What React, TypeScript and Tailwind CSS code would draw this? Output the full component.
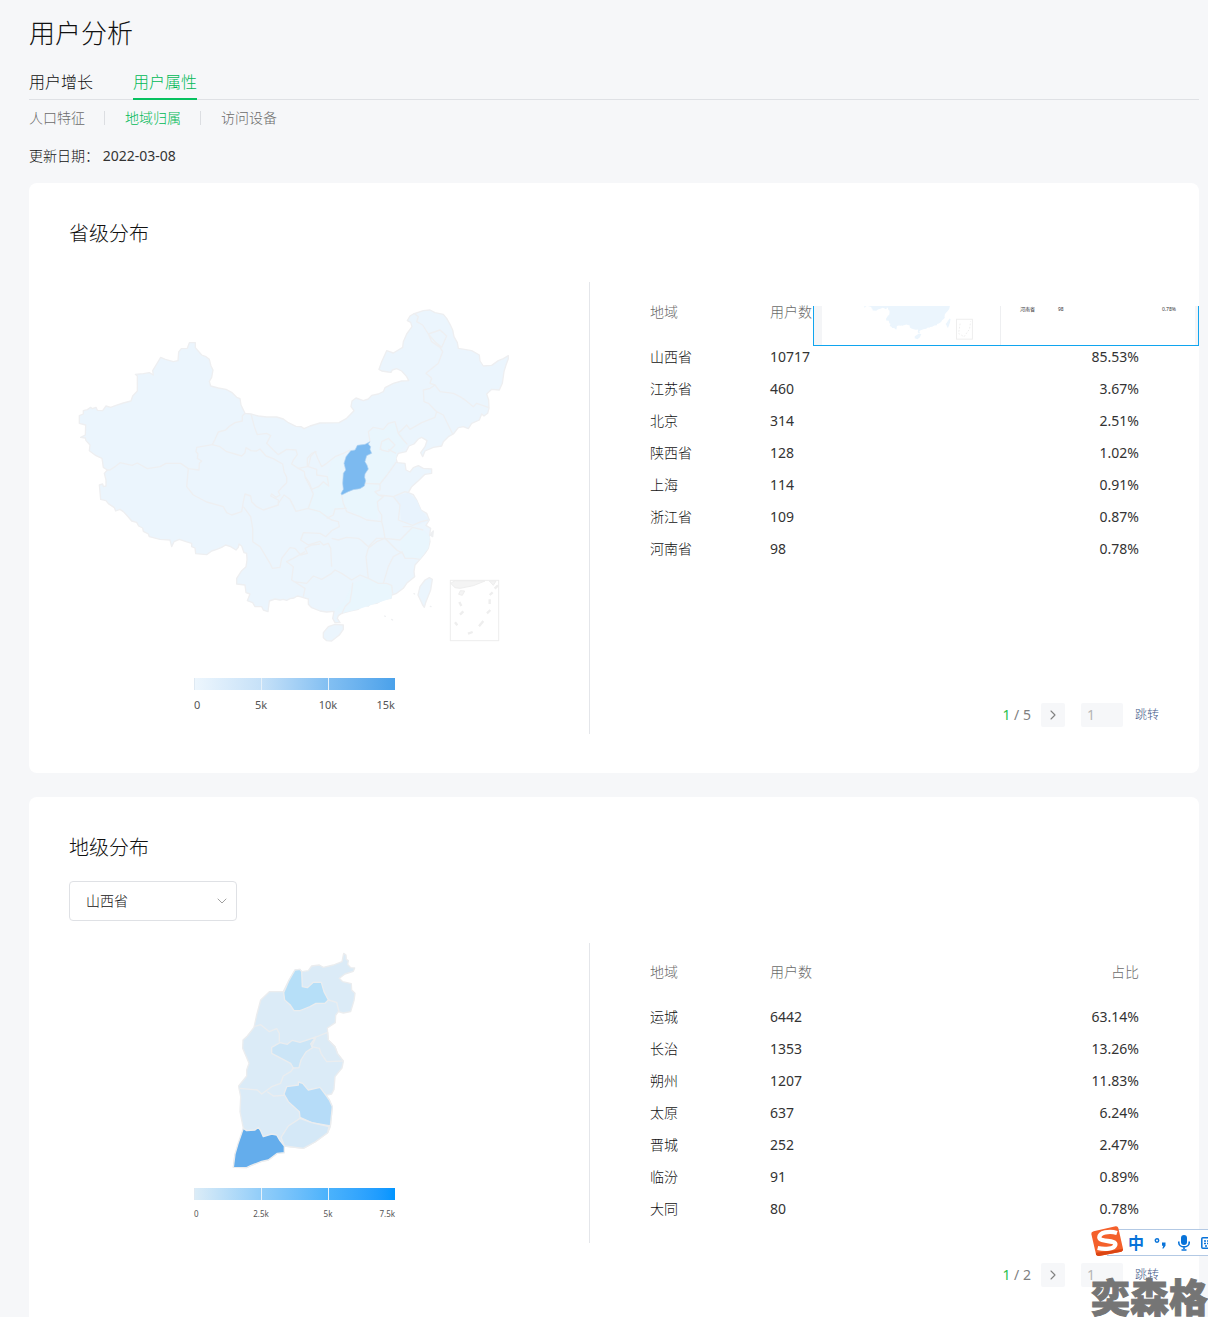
import React from 'react';
import { ChevronDown, ChevronRight } from 'lucide-react';

type Row = [string, string, string];

const provinces: Row[] = [
  ['山西省', '10717', '85.53%'],
  ['江苏省', '460', '3.67%'],
  ['北京', '314', '2.51%'],
  ['陕西省', '128', '1.02%'],
  ['上海', '114', '0.91%'],
  ['浙江省', '109', '0.87%'],
  ['河南省', '98', '0.78%'],
];

const cities: Row[] = [
  ['运城', '6442', '63.14%'],
  ['长治', '1353', '13.26%'],
  ['朔州', '1207', '11.83%'],
  ['太原', '637', '6.24%'],
  ['晋城', '252', '2.47%'],
  ['临汾', '91', '0.89%'],
  ['大同', '80', '0.78%'],
];

const CHINA_OUTLINE =
  'M58 377L70 372L70 362L82 359L92 352L97 356L108 352L112 361L128 362L138 348L152 352L168 346L190 339L213 333L218 318L232 303L232 258L226 253L250 251L268 248L280 255L278 242L290 222L302 202L316 208L340 215L354 212L356 186L364 176L382 175L388 158L406 158L406 173L425 195L438 200L448 208L453 228L459 240L455 262L448 274L452 288L475 294L498 298L515 307L530 322L540 326L543 345L555 370L573 372L595 378L620 381L650 381L670 387L685 398L708 409L723 410L732 416L750 408L780 399L837 398L860 385L882 362L873 350L876 333L888 324L910 332L925 327L935 316L955 312L970 305L975 293L1000 280L1025 273L1046 272L1040 260L1025 243L1010 236L997 240L993 247L985 246L965 243L957 238L965 215L980 182L1000 189L1028 172L1030 155L1040 132L1056 110L1052 97L1042 92L1050 78L1060 72L1090 62L1110 60L1125 68L1150 73L1160 85L1170 103L1178 120L1182 140L1192 158L1195 175L1218 179L1235 182L1258 195L1260 213L1270 228L1295 226L1315 212L1330 206L1345 197L1345 206L1338 225L1332 245L1327 280L1318 300L1295 298L1280 312L1286 330L1287 355L1283 370L1272 378L1265 372L1258 390L1235 400L1225 416L1210 410L1195 413L1180 432L1165 440L1150 455L1145 468L1120 472L1095 483L1088 500L1082 488L1095 470L1101 452L1085 442L1075 447L1062 462L1047 468L1038 485L1015 490L1008 505L1012 518L1035 520L1038 540L1050 546L1060 533L1075 527L1090 535L1115 537L1115 550L1095 553L1075 572L1055 590L1045 608L1060 614L1070 630L1083 660L1100 670L1108 690L1098 706L1112 715L1108 740L1110 755L1105 775L1095 790L1080 808L1065 825L1062 845L1064 860L1040 880L1030 895L1010 910L995 915L993 925L970 928L950 940L930 942L925 948L910 946L895 958L870 963L845 970L835 977L832 985L840 998L825 998L818 985L822 964L800 966L780 963L755 953L745 943L745 927L720 920L712 918L702 924L690 926L680 931L670 928L660 930L645 927L628 933L624 965L610 960L605 950L585 950L578 938L562 932L570 912L558 908L555 885L530 882L530 865L545 842L558 830L561 810L560 790L552 788L545 768L537 762L535 772L528 780L512 770L497 765L485 772L470 778L455 783L440 794L407 791L405 774L395 770L395 760L378 755L358 748L342 755L335 770L330 750L300 748L268 740L265 732L250 724L248 714L236 708L230 697L215 693L205 681L190 665L180 658L167 663L163 653L145 641L138 632L122 628L118 585L128 582L130 590L138 588L138 570L133 550L142 540L130 532L126 505L108 497L88 482L90 465L78 452L76 444L62 442L76 435L77 405L58 400Z';

const CHINA_BORDERS = [
  'M555 370L547 378L547 393L525 398L508 409L497 420L475 426L465 448L457 464L410 472L408 485L414 492L412 505L425 513L418 520L417 540L385 536L362 520L318 520L300 530L262 536L232 519L216 526L180 518L165 530L150 540L142 540',
  'M457 464L480 470L500 485L525 492L545 498L555 488L558 473L573 482L590 483L600 477L618 498L640 506L655 515L668 522L672 545L680 562L680 578L668 590L655 605L660 615L648 622L635 612L632 618L655 630L655 645L610 660L590 650L575 635L572 618L555 612L550 635L545 665L515 675L500 668L490 650L440 636L400 615L380 590L385 536',
  'M573 372L583 410L592 434L620 430L632 437L620 460L640 480L655 494L680 478L708 480L712 494L700 510L695 522L715 535L733 545L735 560L748 578L755 598L775 590L790 575L806 588L802 560L770 555L770 538L745 530L752 500L765 484L773 505L785 530L800 520L825 500L850 490L870 480',
  'M715 535L742 530L742 505L755 490L770 485M735 560L750 590L760 612L745 655L708 664L690 628L672 615L655 640M742 655L780 665L800 680L815 690L835 695L838 710L815 722L797 740L780 730L730 728L722 750L745 765L780 754L790 765L805 760L812 775L815 830',
  'M550 650L572 680L578 715L578 755M578 755L600 770L630 820L637 835L660 832L665 805L690 773L705 775L722 795L742 790L735 775L755 765L780 762M735 785L700 805L680 815L700 830L695 870L735 895L730 920M700 875L740 880L760 858L785 868L815 850L825 840L845 850L875 870L900 855L925 865L955 880L980 880L995 886L998 910',
  'M845 615L850 640L860 665L900 680L920 690L965 695L970 715L975 745L950 755L925 775L918 800L925 865M860 655L825 657L820 675L800 685M815 745L835 750L860 742L895 745L903 750L925 770L950 745L975 745L1020 750L1040 730L1058 712L1090 720',
  'M975 745L1010 780L1028 790L1035 805L1060 805L1080 808M1028 785L1000 800L985 830L970 880M1028 710L1055 710M845 972L855 950L870 935L875 905L878 878',
  'M912 580L960 582L960 600L945 605L955 615L970 620L952 635L955 660L965 675L965 695M960 582L985 550L1010 515M955 615L985 618L1000 620L1035 605L1045 608M1000 620L1020 645L1015 690L1058 706L1083 695L1105 690',
  'M930 455L925 425L940 412L970 418L985 400L1005 395L1015 430L1030 450L1042 463M960 480L965 455L985 445L1005 465L985 485L965 480L960 470M985 478L1008 490',
  'M1015 430L1035 410L1040 405L1050 418L1085 398L1125 382L1130 365L1105 340L1092 335L1090 300L1110 295L1125 285L1140 305L1180 310L1200 320L1218 332L1240 350L1250 340L1287 353M1130 365L1150 375L1162 400L1178 432',
  'M1065 72L1075 80L1070 95L1088 105L1105 132L1115 155L1140 172L1148 185L1135 220L1098 250L1115 265L1110 280L1125 285M1105 132L1140 120L1160 138L1145 172L1125 155Z',
];

const SHANXI_OUTLINE =
  'M371 40L378 45L379 58L385 62L383 73L392 83L404 84L400 94L375 102L358 115L368 125L394 131L395 150L405 160L402 182L392 215L370 219L355 215L347 226L346 248L322 264L323 278L325 300L345 320L352 340L370 365L366 384L345 410L342 448L335 462L318 466L328 480L337 500L331 560L323 578L285 606L250 625L193 618L193 638L172 640L145 660L125 664L92 677L80 683L40 682L45 642L68 590L70 565L60 515L62 470L57 445L56 438L80 408L80 390L87 370L68 325L69 300L82 288L102 262L110 225L122 180L148 155L190 155L207 121L225 90L240 88L245 95L265 92L275 78L298 75L310 82L340 75L366 65Z';

const CITY_FILLS: [string, string][] = [
  ['#b6dff8', 'M225 90L240 88L245 95L247 140L262 143L280 127L304 127L312 155L325 180L315 190L288 190L270 200L252 207L240 212L222 212L210 194L194 180L191 158L207 121Z'],
  ['#cbe5f7', 'M155 322L180 308L202 313L217 301L240 307L288 291L272 312L278 323L258 336L243 360L237 383L220 384L212 370L155 340Z'],
  ['#dcebf6', 'M288 291L323 277L325 300L345 320L352 340L370 363L320 365L303 340L298 325L275 320Z'],
  ['#b6dcf8', 'M200 440L235 435L235 426L248 430L258 442L265 450L300 442L318 466L328 480L337 500L331 558L275 548L240 532L238 515L205 485L192 462Z'],
  ['#d4e8f7', 'M205 558L240 535L275 548L327 560L323 578L285 606L250 625L193 618L183 592Z'],
  ['#64adec', 'M70 565L80 572L105 570L115 562L122 572L130 590L155 582L170 585L180 602L193 618L193 638L172 640L145 660L125 664L92 677L80 683L40 682L45 642L55 608Z'],
];

function ChinaMap() {
  return (
    <svg viewBox="27 0 1353 1110" className="block w-full" role="img" aria-label="省级分布地图">
      <g stroke="#eeeff1" strokeWidth="4" strokeLinejoin="round">
        <path d={CHINA_OUTLINE} fill="#ebf5fd" />
        <path fill="#e9f6fd" stroke="none" d="M850 492L815 512L802 560L762 600L742 655L800 685L820 657L860 655L900 680L955 690L950 640L970 620L945 605L960 582L1008 510L1010 490L1040 463L1005 398L970 418L930 420L932 478L915 515L925 537L908 590L845 615L850 550Z" />
        <path fill="#e9f6fd" stroke="none" d="M1058 712L1090 720L1110 740L1105 775L1080 808L1035 805L1020 770L1022 750ZM878 878L925 865L995 886L995 925L895 958L845 970L825 960L855 930Z" />
        <path fill="#e8f3fd" stroke="none" d="M1000 620L1045 608L1070 630L1083 660L1108 690L1075 705L1025 695L1018 645Z" />
        <g fill="none">
          {CHINA_BORDERS.map((d) => (
            <path key={d} d={d} />
          ))}
        </g>
        <path fill="#ebf5fd" d="M790 1028L805 1010L825 1003L850 1005L850 1018L838 1035L815 1053L800 1052L790 1043Z" />
        <path fill="#ebf5fd" d="M1108 863L1117 868L1112 900L1098 935L1093 952L1088 945L1074 915L1080 890L1095 870Z" />
        <path fill="#eceff1" d="M1110 735L1120 723L1118 740ZM974 978L976 979ZM995 988L998 990ZM1062 911L1064 912ZM1111 949L1113 950Z" />
        <path fill="#7cbaf0" stroke="#b4d5f2" strokeWidth="2" d="M930 455L925 462L932 470L930 478L935 490L920 497L915 515L921 525L925 537L915 552L914 562L917 572L913 588L900 596L880 599L865 605L845 615L843 610L850 598L848 580L850 550L857 540L852 520L858 500L872 482L885 480L892 466L915 463Z" />
      </g>
      <g stroke="#eeeeee" fill="none" strokeWidth="3">
        <rect x="1171" y="871" width="145" height="181" />
        <path fill="#f4f4f4" d="M1172 880L1185 872L1275 873L1240 887L1200 895L1185 893ZM1288 873L1300 886L1308 873ZM1196 913L1201 902L1214 903L1207 916Z" />
        <path strokeWidth="7" d="M1198 936L1204 948M1200 974L1210 964M1185 997L1192 1006M1224 1031L1238 1026M1257 1009L1270 993M1281 970L1291 960M1289 928L1289 942M1289 915L1298 907M1304 896L1314 886" />
      </g>
    </svg>
  );
}

function ShanxiMap() {
  return (
    <svg viewBox="-15 9 480 717" className="mx-auto block w-40" role="img" aria-label="地级分布地图">
      <g stroke="#ebedef" strokeWidth="4" strokeLinejoin="round">
        <path d={SHANXI_OUTLINE} fill="#dbebf7" />
        {CITY_FILLS.map(([fill, d]) => (
          <path key={d} d={d} fill={fill} />
        ))}
        <path fill="none" d="M102 260L122 254L148 275L170 266L178 280L178 305M325 180L350 187L357 215M220 384L213 394L190 408L182 430L155 440L125 462L112 450L60 445M142 455L160 468L192 466" />
      </g>
    </svg>
  );
}

function Legend({ segments, labels, small }: { segments: string[]; labels: string[]; small?: boolean }) {
  return (
    <div className="mx-auto w-[201px]">
      <div className="grid h-3 grid-cols-3 gap-px border-l border-[#dfe9f2] bg-[#e6f1fa]">
        {segments.map((s) => (
          <div key={s} className={s} />
        ))}
      </div>
      <div
        className={`grid grid-cols-[1fr_2fr_2fr_1fr] text-center leading-[14px] font-normal text-[#555] ${
          small ? 'mt-[7px] text-[8px]' : 'mt-2 text-[11px]'
        }`}
      >
        {labels.map((l) => (
          <span key={l} className="first:text-left last:text-right">{l}</span>
        ))}
      </div>
    </div>
  );
}

function DataTable({ rows }: { rows: Row[] }) {
  return (
    <div className="pr-5">
      <table className="w-full table-fixed text-sm text-[#111]">
        <thead>
          <tr className="h-8 text-[#6b6b6b]">
            <th className="w-[120px] p-0 text-left font-light">地域</th>
            <th className="p-0 text-left font-light">用户数</th>
            <th className="w-[120px] p-0 text-right font-light">占比</th>
          </tr>
        </thead>
        <tbody className="before:block before:h-[13px]">
          {rows.map(([name, count, share]) => (
            <tr key={name} className="h-8">
              <td className="p-0">{name}</td>
              <td className="p-0 font-normal text-[#333]">{count}</td>
              <td className="p-0 text-right font-normal text-[#333]">{share}</td>
            </tr>
          ))}
        </tbody>
      </table>
    </div>
  );
}

function Pager({ total }: { total: number }) {
  return (
    <div className="flex h-6 items-center justify-end text-sm text-[#808080]">
      <span className="font-normal">
        <span className="text-[#2abf4c]">1</span> / {total}
      </span>
      <button aria-label="下一页" className="ml-[10px] flex h-6 w-6 items-center justify-center rounded-xs bg-[#f6f7f9]">
        <ChevronRight size={16} strokeWidth={1.6} />
      </button>
      <input aria-label="页码" placeholder="1" className="ml-4 h-6 w-[42px] rounded-xs bg-[#f6f7f9] px-[6px] leading-6 font-normal placeholder:text-[#b5b5b5]" />
      <button className="ml-3 text-xs text-[#435a8a]">跳转</button>
    </div>
  );
}

function PreviewOverlay() {
  return (
    <div className="absolute top-[119px] right-0 w-[386px] bg-white pt-1">
      <div className="flex h-10 overflow-hidden border-x border-b border-[#10a5ef]">
        <div className="w-2 bg-[#f4f5f7]" />
        <div className="w-[179px] border-r border-[#eeeff1]">
          <svg viewBox="0 750 1440 330" className="ml-[6px] block h-[38px] w-[158px]" preserveAspectRatio="xMidYMin meet" aria-hidden="true">
            <path d={CHINA_OUTLINE} fill="#ebf5fd" />
            <path fill="#ebf5fd" d="M790 1028L825 1003L850 1005L838 1035L815 1053L790 1043ZM1108 863L1117 868L1112 900L1093 952L1074 915Z" />
            <rect x="1171" y="871" width="145" height="181" fill="none" stroke="#eee" strokeWidth="9" />
            <path fill="none" stroke="#eee" strokeWidth="9" strokeDasharray="16 14" d="M1204 910L1190 1000L1240 1030L1290 960L1300 890" />
          </svg>
        </div>
        <div className="flex h-[7px] flex-1 items-center pl-[19px] text-[5px] leading-[7px] font-normal text-[#333]">
          <span className="w-[38px]">河南省</span>
          <span className="flex-1">98</span>
          <span className="pr-[19px]">0.78%</span>
        </div>
        <div className="w-[3px] bg-[#f4f5f7]" />
      </div>
    </div>
  );
}

function InputMethodBar() {
  return (
    <div className="absolute right-0 bottom-[60px] flex h-[31px] w-[117px] items-center overflow-hidden">
      <div className="mt-0.5 ml-4 flex h-[27px] flex-1 items-center border-y border-[#b3c9e4] bg-white pl-[21px] text-[#0873d9]">
        <span className="text-base leading-6 font-bold">中</span>
        <svg className="ml-[10px] w-3 shrink-0" viewBox="0 0 12 12" aria-hidden="true">
          <circle cx="3" cy="3.5" r="1.7" fill="none" stroke="currentColor" strokeWidth="1.5" />
          <path d="M8 5.5h3.5v3.2L9.5 11.5H8.3L9.3 8.7H8z" fill="currentColor" />
        </svg>
        <svg className="ml-3 h-4 w-3 shrink-0" viewBox="0 0 12 16" aria-hidden="true">
          <rect x="3" y="0" width="6" height="10" rx="3" fill="currentColor" />
          <path d="M0.8 6.5v1.2a5.2 4.2 0 0 0 10.4 0V6.5M6 12v2M3.5 15h5" fill="none" stroke="currentColor" strokeWidth="1.6" />
        </svg>
        <svg className="ml-[11px] h-3 w-4 shrink-0" viewBox="0 0 16 12" aria-hidden="true">
          <rect x="0.8" y="0.8" width="14" height="10.4" rx="1" fill="none" stroke="currentColor" strokeWidth="1.5" />
          <path d="M3 4h10M3 6.5h10M4 9h8" stroke="currentColor" strokeWidth="1.5" strokeDasharray="2 1" />
        </svg>
      </div>
      <svg className="absolute top-0 left-0 h-[31px] w-[33px]" viewBox="0 0 99 93" aria-hidden="true">
        <path d="M8 16L74 1Q80 0 82 6L96 68Q97 74 91 77L24 90Q17 91 15 85L1 24Q0 18 8 16Z" fill="#f4602b" />
        <path d="M15 80L96 69Q97 74 91 77L24 90Q17 91 15 85Z" fill="#db4513" />
        <path d="M78 21C54 13 25 20 25 34C26 49 75 41 73 56C70 69 42 71 20 66" fill="none" stroke="#fff" strokeWidth="13" />
      </svg>
    </div>
  );
}

export default function App() {
  return (
    <div className="relative min-h-screen overflow-hidden bg-[#f6f7f9] pr-[9px] pl-[29px] font-['Noto_Sans','Noto_Sans_CJK_SC',sans-serif] font-light text-[#111]">
      <header>
        <h1 className="pt-[15px] text-[26px] leading-9 font-light">用户分析</h1>
        <nav className="mt-[19px] flex gap-10 border-b border-[#dfe1e5] text-base">
          <a href="#growth" className="-mb-px h-[30px] leading-6">用户增长</a>
          <a href="#attributes" className="-mb-px h-[30px] border-b-2 border-[#07c160] leading-6 text-[#00b956]">用户属性</a>
        </nav>
        <nav className="mt-2 flex items-center text-sm leading-5 text-[#6b6b6b]">
          <a href="#population">人口特征</a>
          <span className="mr-5 ml-[19px] h-[14px] w-px bg-[#dcdee2]" />
          <a href="#region" className="text-[#00b956]">地域归属</a>
          <span className="mr-5 ml-[19px] h-[14px] w-px bg-[#dcdee2]" />
          <a href="#device">访问设备</a>
        </nav>
        <p className="mt-[18px] text-sm leading-5">
          更新日期： <time className="font-normal text-[#333]">2022-03-08</time>
        </p>
      </header>

      <main>
        <section className="relative mt-[17px] rounded-lg bg-white px-10 pt-9 pb-[39px]">
          <h2 className="text-xl leading-[30px] font-light">省级分布</h2>
          <div className="mt-[33px] grid grid-cols-[520fr_570fr]">
            <div className="pt-2">
              <div className="w-[451px]">
                <ChinaMap />
                <div className="mt-[18px]">
                  <Legend
                    labels={['0', '5k', '10k', '15k']}
                    segments={[
                      'bg-linear-to-r from-[#edf6fd] to-[#c6e1f8]',
                      'bg-linear-to-r from-[#c6e1f8] to-[#82bff2]',
                      'bg-linear-to-r from-[#82bff2] to-[#4aa1ea]',
                    ]}
                  />
                </div>
              </div>
            </div>
            <div className="flex min-h-[452px] flex-col justify-between border-l border-[#e4e6ea] pt-[14px] pb-[7px] pl-[60px]">
              <DataTable rows={provinces} />
              <Pager total={5} />
            </div>
          </div>
          <PreviewOverlay />
        </section>

        <section className="mt-6 rounded-t-lg bg-white px-10 pt-9 pb-[30px]">
          <h2 className="text-xl leading-[30px] font-light">地级分布</h2>
          <div className="relative mt-[18px] w-[168px]">
            <select aria-label="省份" className="block h-10 w-full appearance-none rounded-sm border border-[#dfe1e5] bg-white pl-4 text-sm">
              <option>山西省</option>
            </select>
            <ChevronDown size={16} strokeWidth={1.4} className="pointer-events-none absolute top-3 right-[7px] text-[#999]" />
          </div>
          <div className="mt-[22px] grid grid-cols-[520fr_570fr]">
            <div className="w-[451px]">
              <ShanxiMap />
              <div className="mt-[6px]">
                <Legend
                  small
                  labels={['0', '2.5k', '5k', '7.5k']}
                  segments={[
                    'bg-linear-to-r from-[#dbecf7] to-[#91cdf9]',
                    'bg-linear-to-r from-[#91cdf9] to-[#4ab2fc]',
                    'bg-linear-to-r from-[#4ab2fc] to-[#0095ff]',
                  ]}
                />
              </div>
            </div>
            <div className="min-h-[300px] border-l border-[#e4e6ea] pt-[13px] pl-[60px]">
              <DataTable rows={cities} />
            </div>
          </div>
          <div className="mt-5">
            <Pager total={2} />
          </div>
        </section>
      </main>

      <InputMethodBar />
      <div className="pointer-events-none absolute right-0 bottom-0 text-[39px] leading-10 font-black text-[#757575] [-webkit-text-stroke:1px_#757575]">奕森格</div>
    </div>
  );
}
